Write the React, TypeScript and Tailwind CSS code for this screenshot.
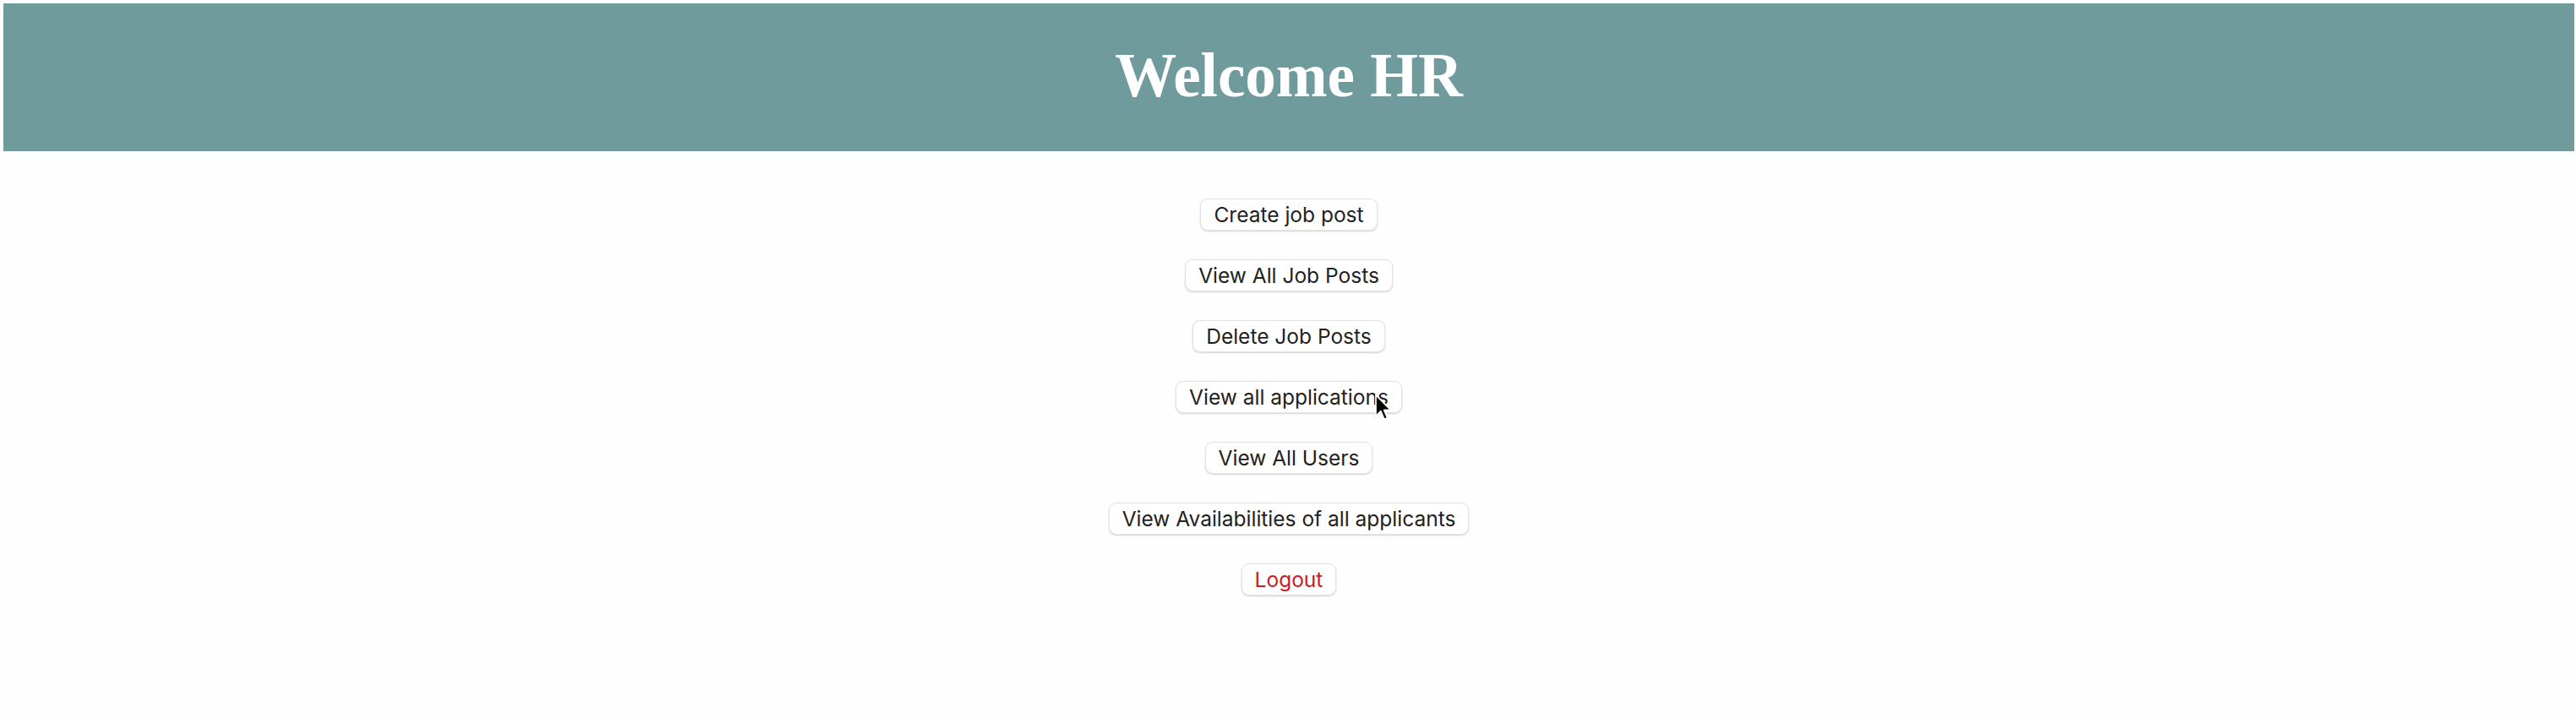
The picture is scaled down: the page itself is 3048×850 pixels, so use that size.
const ACTIONS = [
  'Create job post',
  'View All Job Posts',
  'Delete Job Posts',
  'View all applications',
  'View All Users',
  'View Availabilities of all applicants',
];

function Cursor() {
  return (
    <svg
      className="pointer-events-none absolute left-[1626px] top-[466px]"
      width="22"
      height="34"
      viewBox="0 0 20 32"
    >
      <path
        d="M1.5 1.5 L1.5 25 L7 19.5 L10.8 28.5 L14.3 27 L10.6 18.3 L18 18.3 Z"
        fill="#000"
        stroke="#fff"
        strokeWidth="1.6"
        strokeLinejoin="round"
      />
    </svg>
  );
}

export default function App() {
  return (
    <div className="relative min-h-[850px] bg-[#fefefe] pl-[4px] pr-[2px] pt-[4px]">
      <header className="flex h-[175px] items-center justify-center bg-[#6f9b9c]">
        <h1 className="pb-[4px] font-['Liberation_Serif',serif] text-[73px] font-bold leading-none text-white">
          Welcome HR
        </h1>
      </header>

      <nav className="mt-[56px] flex flex-col items-center gap-[34px]">
        {ACTIONS.map((label) => (
          <button
            key={label}
            className="h-[38px] rounded-[9px] border border-[#e3e3e3] bg-white px-[15px] font-['Inter',sans-serif] text-[24.5px] leading-none text-[#222] shadow-[0_1px_2px_rgba(0,0,0,0.18)]"
          >
            {label}
          </button>
        ))}
        <button className="h-[38px] rounded-[9px] border border-[#e3e3e3] bg-white px-[15px] font-['Inter',sans-serif] text-[24.5px] leading-none text-[#c8201c] shadow-[0_1px_2px_rgba(0,0,0,0.18)]">
          Logout
        </button>
      </nav>

      <Cursor />
    </div>
  );
}
